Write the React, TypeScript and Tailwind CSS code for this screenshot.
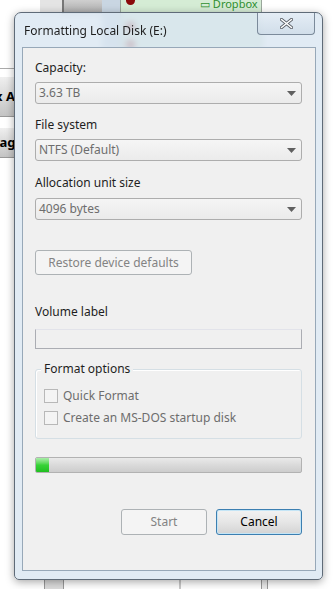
import React from 'react'

const font = { fontFamily: '"Noto Sans", "Open Sans", sans-serif' }

const Combo = ({ value }: { value: string }) => (
  <div className="flex h-[22px] items-center justify-between rounded-[3px] border border-[#adadad] bg-gradient-to-b from-[#f5f5f5] to-[#ebebeb] pl-[3px] pr-[5px] text-[12px] text-[#6d6d6d]">
    <span>{value}</span>
    <svg width="9" height="5" viewBox="0 0 9 5">
      <path d="M0 0 H9 L4.5 5 Z" fill="#606060" />
    </svg>
  </div>
)

const Check = ({ label }: { label: string }) => (
  <div className="flex h-[22px] items-center gap-[5px]">
    <div className="h-[14px] w-[14px] border border-[#b8b8b8] bg-[#f4f4f4]" />
    <span className="text-[12px] text-[#6d6d6d]">{label}</span>
  </div>
)

const App = () => {
  return (
    <div className="relative h-[589px] w-[333px] overflow-hidden bg-white" style={font}>
      {/* desktop behind the dialog */}
      <div className="absolute left-[40px] top-0 h-[14px] w-[22px] bg-[#e4e4e4]" />
      <div className="absolute left-[62px] top-0 h-[14px] w-[40px] border-l-2 border-[#777] bg-gradient-to-b from-[#cfcfcf] to-[#a9a9a9]" />
      <div className="absolute left-[102px] top-0 h-[50px] w-[18px] bg-[#c9d6e2]" />
      <div className="absolute left-[120px] top-0 h-[50px] w-[142px] border-l border-r border-[#9aa79c] bg-[#d5ecd5]" />
      <div className="absolute left-[126px] top-[-4px] h-[9px] w-[9px] rounded-full bg-[#8a0a0a]" />
      <div className="absolute left-[126px] top-[22px] h-[9px] w-[9px] rounded-full bg-[#8a0a0a]" />
      <div className="absolute left-[126px] top-[40px] h-[9px] w-[9px] rounded-full bg-[#8a0a0a]" />
      <div className="absolute left-[200px] top-[-2px] text-[11px] leading-[12px] text-[#2f8f2f]">▭ Dropbox</div>
      <div className="absolute left-0 top-[68px] h-px w-[14px] bg-[#aaa]" />
      <div className="absolute left-0 top-[77px] flex h-[40px] w-[14px] items-center overflow-hidden border-b border-[#999] bg-gradient-to-b from-[#efefef] to-[#c4c4c4] text-[13px] font-bold whitespace-nowrap text-black">
        <span className="ml-[-5px]">x A</span>
      </div>
      <div className="absolute left-0 top-[128px] flex h-[30px] w-[14px] items-center overflow-hidden border-b border-[#999] bg-gradient-to-b from-[#efefef] to-[#c4c4c4] text-[13px] font-bold whitespace-nowrap text-black">
        <span className="ml-[-6px]">rag</span>
      </div>
      <div className="absolute left-[44px] top-[580px] h-[9px] w-[20px] border-x border-[#999] bg-[#dcdcdc]" />
      <div className="absolute left-[179px] top-[580px] h-[9px] w-[2px] bg-[#c9c9c9]" />
      <div className="absolute left-[261px] top-[580px] h-[9px] w-[7px] border-x border-[#999] bg-[#ececec]" />

      {/* dialog window */}
      <div className="absolute left-[14px] top-[12px] flex h-[568px] w-[309px] flex-col rounded-t-[7px] rounded-b-[5px] border border-[#5f6b78] bg-[#dae6f1]/80 shadow-[0_2px_8px_rgba(0,0,0,0.35)] backdrop-blur-[3px]">
        <div className="flex h-[34px] items-start">
          <span className="ml-[9px] mt-[10px] text-[12px] leading-[16px] text-[#1e1e1e]">Formatting Local Disk (E:)</span>
          <div className="ml-auto mr-[7px] flex h-[22px] w-[58px] items-center justify-center rounded-b-[4px] border border-t-0 border-[#7b8a9a] bg-gradient-to-b from-[#e6eef6]/70 to-[#cbd9e6]/70">
            <svg width="13" height="11" viewBox="0 0 13 11">
              <path d="M1.5 1.5 L11.5 9.5 M11.5 1.5 L1.5 9.5" stroke="#5a5f66" strokeWidth="3.2" strokeLinecap="round" />
              <path d="M1.5 1.5 L11.5 9.5 M11.5 1.5 L1.5 9.5" stroke="#ffffff" strokeWidth="1.6" strokeLinecap="round" />
            </svg>
          </div>
        </div>

        <div className="mb-[8px] ml-[7px] mr-[6px] flex flex-1 flex-col border border-[#97a8b8] bg-[#f0f0f0] pl-[12px] pr-[13px] pt-[12px] text-[12px] leading-[16px] text-[#1e1e1e]">
          <div>Capacity:</div>
          <div className="mt-[6px]">
            <Combo value="3.63 TB" />
          </div>
          <div className="mt-[13px]">File system</div>
          <div className="mt-[6px]">
            <Combo value="NTFS (Default)" />
          </div>
          <div className="mt-[14px]">Allocation unit size</div>
          <div className="mt-[7px]">
            <Combo value="4096 bytes" />
          </div>
          <div className="mt-[30px] flex h-[25px] w-[157px] items-center justify-center rounded-[3px] border border-[#adb2b5] bg-[#f4f4f4] text-[#838383]">
            Restore device defaults
          </div>
          <div className="mt-[29px]">Volume label</div>
          <div className="mt-[9px] h-[20px] border border-[#abadb3] border-t-[#e2e3ea] bg-[#f0f0f0]" />
          <div className="relative mt-[20px] h-[70px] rounded-[3px] border border-[#d5dfe5] pl-[8px] pt-[15px] shadow-[inset_1px_1px_0_#ffffff]">
            <div className="absolute left-[5px] top-[-9px] bg-[#f0f0f0] px-[3px] text-[#1e1e1e]">Format options</div>
            <Check label="Quick Format" />
            <Check label="Create an MS-DOS startup disk" />
          </div>
          <div className="mt-[18px] flex h-[16px] overflow-hidden rounded-[2px] border border-[#b2b2b2] bg-gradient-to-b from-[#eaeaea] via-[#dadada] to-[#cdcdcd]">
            <div className="h-full w-[13px] bg-gradient-to-b from-[#a8eea8] via-[#37d337] to-[#1fbf1f]" />
          </div>
          <div className="mt-[36px] flex justify-end gap-[9px]">
            <div className="flex h-[26px] w-[86px] items-center justify-center rounded-[3px] border border-[#adb2b5] bg-[#f4f4f4] text-[#838383]">
              Start
            </div>
            <div className="flex h-[26px] w-[86px] items-center justify-center rounded-[3px] border border-[#3c7fb1] bg-gradient-to-b from-[#f2f2f2] via-[#e6e6e6] to-[#d3d3d3] text-black shadow-[inset_0_0_0_1px_#c4e5f6]">
              Cancel
            </div>
          </div>
        </div>
      </div>
    </div>
  )
}

export default App
